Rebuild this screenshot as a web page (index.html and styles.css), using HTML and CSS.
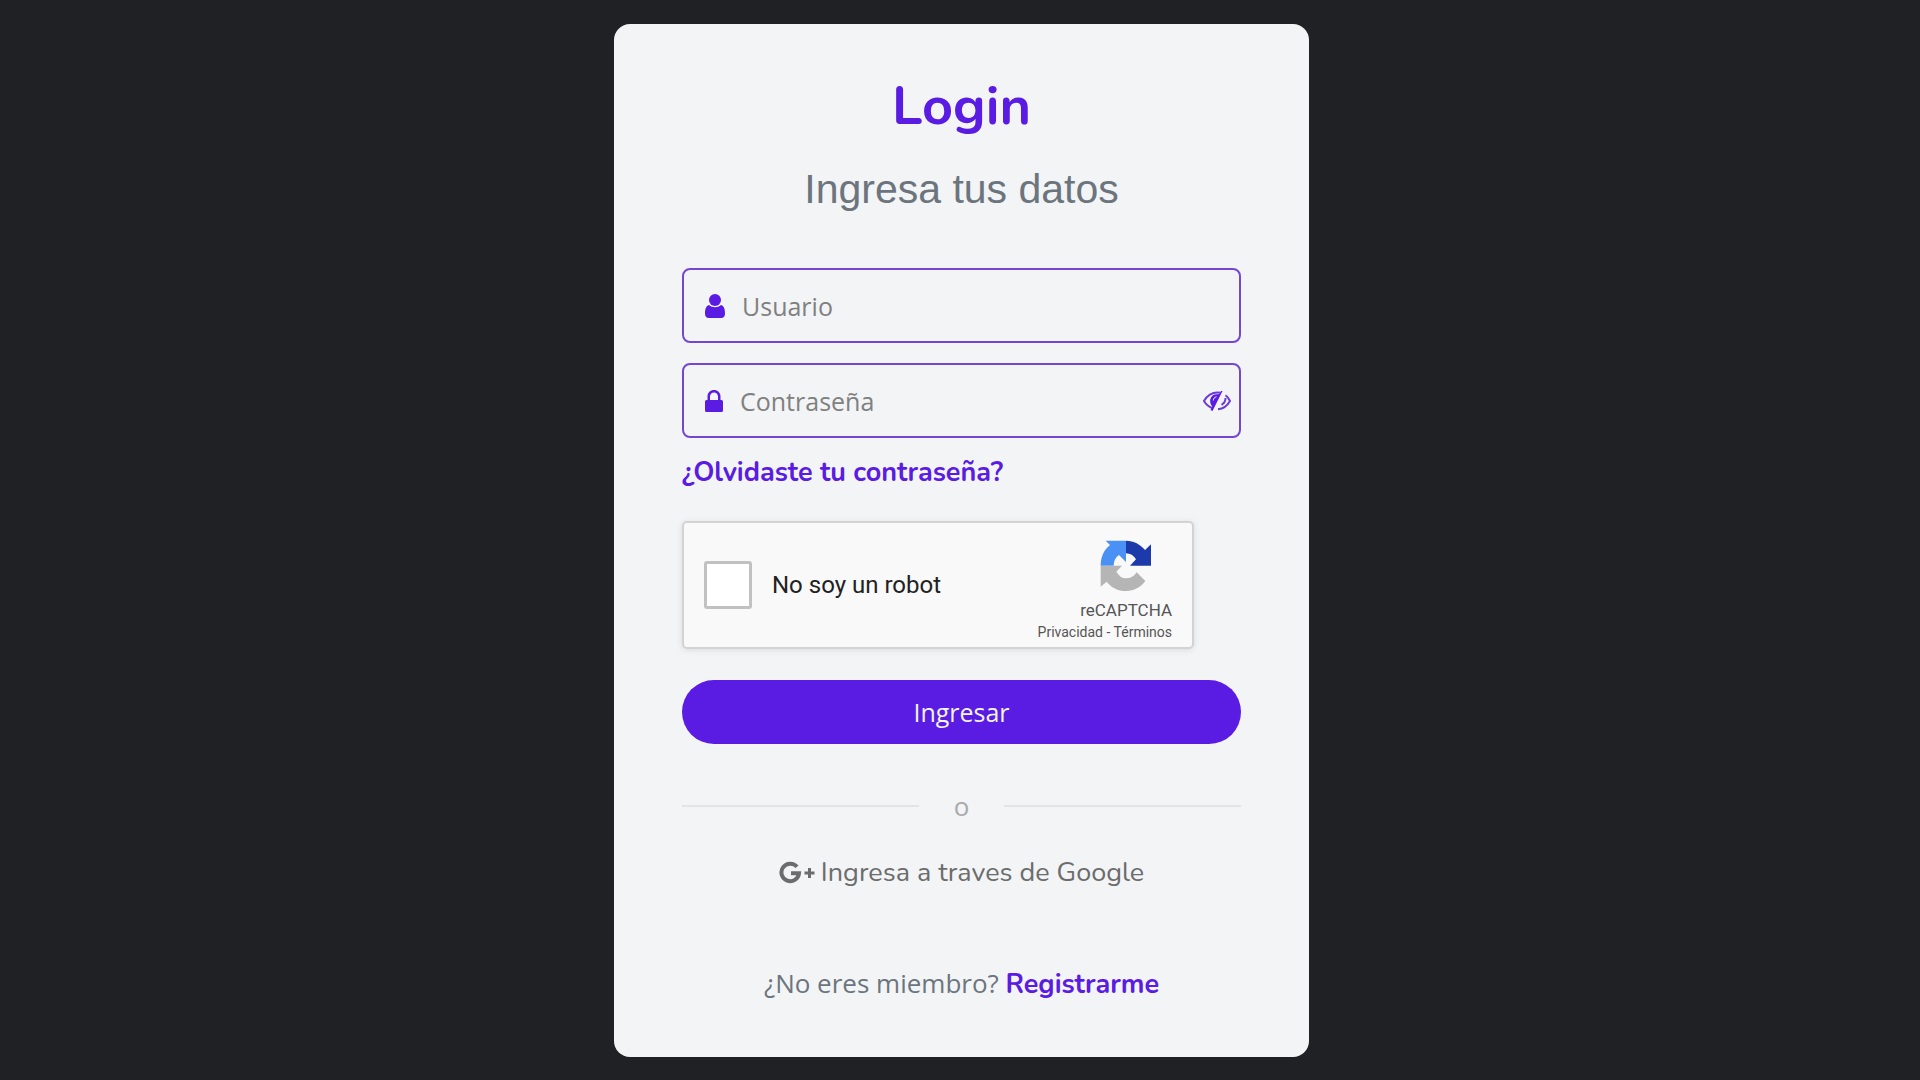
FILE: index.html
```html
<!DOCTYPE html>
<html lang="es">
<head>
<meta charset="utf-8">
<meta name="viewport" content="width=device-width, initial-scale=1">
<title>Login</title>
<link rel="stylesheet" href="styles.css">
</head>
<body>
<main class="card">
  <h1 class="title">Login</h1>
  <p class="subtitle">Ingresa tus datos</p>
  <form class="form">
    <div class="fields">
      <label class="field">
        <svg class="field-icon user" viewBox="0 0 20 24" aria-hidden="true"><circle cx="10" cy="6" r="6"/><path d="M4 11C1 12 0 15 0 19.500C0 22.500 1.500 24 4 24H16C18.500 24 20 22.500 20 19.500C20 15 19 12 16 11C12.500 14 7.500 14 4 11Z"/></svg>
        <input type="text" placeholder="Usuario" aria-label="Usuario">
      </label>
      <div class="field">
        <svg class="field-icon lock" viewBox="0 0 18 22" aria-hidden="true"><path fill-rule="evenodd" d="M2.500 10V6.500C2.500 2.500 5.500 0 9 0C12.500 0 15.500 2.500 15.500 6.500V10H16.500Q18 10 18 11.500V20.500Q18 22 16.500 22H1.500Q0 22 0 20.500V11.500Q0 10 1.500 10ZM5 10H13V6.500C13 4.500 11.500 2.500 9 2.500C6.500 2.500 5 4.500 5 6.500Z"/></svg>
        <input type="password" placeholder="Contraseña" aria-label="Contraseña">
        <button class="eye" type="button" aria-label="Mostrar contraseña">
          <svg viewBox="0 0 28 20" aria-hidden="true"><path class="line" d="M17.500 1.800C9.500 .5 4 5 1 10C3 13.500 6 16 10 17.300M22.500 4.200C24.500 5.600 26 7.700 27 10C24.500 14.500 20 17.800 15 18.300M22.500 7C22.500 10 21 12.500 18.500 13.800"/><path d="M19.500 0L9.500 20L7.500 19L9.300 15.500C5.500 11 7 5 11.500 3.500L16.500 3L18 0Z"/><path class="shine" d="M10.300 9.500C10.300 7.500 11.500 6.200 13.500 5.800"/></svg>
        </button>
      </div>
    </div>
    <a class="link forgot" href="#">¿Olvidaste tu contraseña?</a>
    <div class="captcha">
      <label class="robot"><input type="checkbox"><span>No soy un robot</span></label>
      <div class="brand">
        <svg viewBox="300 92 156 156" aria-hidden="true"><path fill="#4a90f5" d="M378 94H317L330 107C312 122 302 142 302 169H341C341 156 346 144 357 137L378 158Z"/><path fill="#1c3aa9" d="M378 94C402 94 421 105 435 122L453 105V169H390L408 150C401 139 391 132 378 132Z"/><path fill="#b5b5b5" d="M302 169H366L349 187C357 200 366 207 378 207C392 207 402 201 410 189L436 215C422 234 402 245 378 245C353 245 333 234 320 217L302 232Z"/></svg>
        <span class="name">reCAPTCHA</span>
        <span class="terms"><a href="#">Privacidad</a> - <a href="#">Términos</a></span>
      </div>
    </div>
    <button class="submit" type="submit">Ingresar</button>
  </form>
  <div class="divider"><span>o</span></div>
  <a class="google" href="#"><svg viewBox="0 0 36 24" aria-hidden="true"><path stroke-width="4" d="M18 5.800A8.800 8.800 0 1 0 20 12.300H12"/><path stroke-width="3" d="M25.500 12H35.500M30.500 7V17"/></svg><span>Ingresa a traves de Google</span></a>
  <p class="signup">¿No eres miembro? <a class="link" href="#">Registrarme</a></p>
</main>
</body>
</html>
```
FILE: styles.css
```css
* { box-sizing: border-box; }

body {
  margin: 0;
  padding: 24px 16px 24px 19px;
  min-height: 100vh;
  background: #202124;
  font-family: "Open Sans", "Noto Sans", sans-serif;
  font-size: 26px;
  line-height: 32px;
}

a { color: inherit; text-decoration: none; }
button { padding: 0; border: 0; font: inherit; cursor: pointer; }

.card {
  max-width: 695px;
  margin: 0 auto;
  padding: 48px 68px;
  border-radius: 16px;
  background: #f2f4f6;
  color: #6c757d;
}

.title {
  margin: 0;
  color: #5a1be3;
  font: 700 54px/68px Nunito, Lato, sans-serif;
  text-align: center;
}

.subtitle {
  margin: 25px 0 55px;
  font: 41px/48px "Liberation Sans", Arial, sans-serif;
  text-align: center;
}

.form { display: flex; flex-direction: column; }
.fields { display: grid; gap: 20px; }

.field {
  display: flex;
  align-items: center;
  height: 75px;
  padding: 0 8px 0 21px;
  border: 2px solid #7547d1;
  border-radius: 8px;
}

.field-icon { flex: none; height: 24px; fill: #5a1be3; }
.user { width: 20px; }
.lock { width: 18px; height: 22px; }

.field input {
  flex: 1;
  min-width: 0;
  padding: 0 0 0 17px;
  border: 0;
  outline: 0;
  background: none;
  font: inherit;
  font-size: 25px;
}

.field input::placeholder { color: #808080; opacity: 1; }

.eye { display: flex; background: none; }
.eye svg { width: 28px; height: 20px; fill: #5a1be3; }
.eye .line { fill: none; stroke: #6b3bd6; stroke-width: 2; }
.eye .shine { fill: none; stroke: #f2f4f6; stroke-width: 1; }

.link { color: #5a1be3; font: 700 27px/32px Nunito, Lato, sans-serif; }
.forgot { align-self: flex-start; margin: 19px 0 32px; }

.captcha {
  display: flex;
  justify-content: space-between;
  align-items: center;
  width: 100%;
  max-width: 512px;
  height: 128px;
  padding: 0 20px;
  border: 2px solid #d3d3d3;
  border-radius: 5px;
  background: #f9f9f9;
  box-shadow: 0 1px 6px rgba(0, 0, 0, .1);
  font-family: Roboto, sans-serif;
}

.robot { display: flex; align-items: center; gap: 20px; color: #222; font-size: 24px; }

.robot input {
  appearance: none;
  width: 48px;
  height: 48px;
  margin: 0;
  border: 3px solid #c1c1c1;
  border-radius: 3px;
  background: #fff;
}

.brand { display: flex; flex-direction: column; align-items: flex-end; padding-top: 12px; color: #555; }
.brand svg { width: 52px; height: 52px; margin: 0 20px 6px 0; }
.name { font-size: 17px; line-height: 24px; }
.terms { font-size: 14px; line-height: 20px; }

.submit {
  height: 64px;
  margin-top: 31px;
  border-radius: 32px;
  background: #5a1be3;
  color: #f2f4f6;
  font-size: 25px;
}

.divider {
  display: flex;
  align-items: center;
  gap: 35px;
  margin: 46px 0 35px;
  color: #aaa;
}

.divider::before, .divider::after { content: ""; flex: 1; height: 2px; background: #e2e4e6; }

.google {
  display: flex;
  justify-content: center;
  align-items: center;
  gap: 6px;
  color: #6c6c6c;
  font-family: Nunito, Lato, sans-serif;
  font-size: 27px;
}

.google svg { width: 36px; height: 24px; fill: none; stroke: #6c6c6c; }

.signup { margin: 78px 0 8px; text-align: center; }
```
